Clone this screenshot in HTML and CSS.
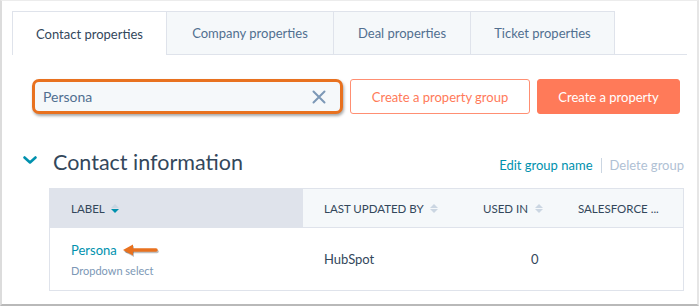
FILE: index.html
```html
<!DOCTYPE html>
<html lang="en">
<head>
    <meta charset="UTF-8">
    <title>Properties</title>
    <link rel="stylesheet" href="styles.css">
</head>
<body>
<div class="frame">

    <!-- Tabs -->
    <div class="tabs">
        <div class="tab active">Contact properties</div>
        <div class="tab tab-company">Company properties</div>
        <div class="tab tab-deal">Deal properties</div>
        <div class="tab tab-ticket">Ticket properties</div>
        <div class="tab-rest"></div>
    </div>

    <!-- Search and actions -->
    <div class="toolbar">
        <div class="search-highlight">
            <div class="search">
                <span class="search-text">Persona</span>
                <svg class="clear-icon" width="14" height="14" viewBox="0 0 14 14">
                    <path d="M1.5 1.5 L12.5 12.5 M12.5 1.5 L1.5 12.5" stroke="#7c98b6" stroke-width="2" stroke-linecap="round"/>
                </svg>
            </div>
        </div>
        <button class="btn btn-secondary">Create a property group</button>
        <button class="btn btn-primary">Create a property</button>
    </div>

    <!-- Group header -->
    <div class="group-header">
        <svg class="chevron" width="14" height="8" viewBox="0 0 14 8">
            <path d="M1.5 1.5 L7 6.5 L12.5 1.5" fill="none" stroke="#0091ae" stroke-width="2.6" stroke-linecap="round" stroke-linejoin="round"/>
        </svg>
        <h2 class="group-title">Contact information</h2>
        <div class="group-actions">
            <span class="link">Edit group name</span>
            <span class="divider"></span>
            <span class="link-disabled">Delete group</span>
        </div>
    </div>

    <!-- Table -->
    <table class="props">
        <thead>
            <tr>
                <th class="col-label sorted">LABEL <span class="sort"><i class="up"></i><i class="down"></i></span></th>
                <th class="col-updated">LAST UPDATED BY <span class="sort"><i class="up"></i><i class="down"></i></span></th>
                <th class="col-used">USED IN <span class="sort"><i class="up"></i><i class="down"></i></span></th>
                <th class="col-sf">SALESFORCE ...</th>
            </tr>
        </thead>
        <tbody>
            <tr>
                <td class="col-label">
                    <div class="prop-name">
                        <span class="link">Persona</span>
                        <svg class="arrow" width="40" height="14" viewBox="0 0 40 14">
                            <path d="M4 7 L34 7" stroke="rgba(0,0,0,0.25)" stroke-width="3.5" stroke-linecap="round" transform="translate(1,1.5)"/>
                            <path d="M1 7 L11 1.5 L11 12.5 Z" fill="rgba(0,0,0,0.25)" transform="translate(1,1.5)"/>
                            <path d="M6 7 L34 7" stroke="#e8711f" stroke-width="3.5" stroke-linecap="round"/>
                            <path d="M1 7 L11 1.5 L11 12.5 Z" fill="#e8711f"/>
                        </svg>
                    </div>
                    <div class="prop-type">Dropdown select</div>
                </td>
                <td class="col-updated">HubSpot</td>
                <td class="col-used num">0</td>
                <td class="col-sf"></td>
            </tr>
        </tbody>
    </table>

</div>
</body>
</html>
```

FILE: styles.css
```css
body {
    margin: 0;
    font-family: Lato, "Open Sans", sans-serif;
    background-color: #ffffff;
    color: #33475b;
}

.frame {
    width: 699px;
    height: 306px;
    box-sizing: border-box;
    border-left: 2px solid #dcdcdc;
    border-top: 1px solid #ececec;
    border-right: 2px solid #e6e6e6;
    border-bottom: 2px solid #b9b9b9;
    padding: 10px 0 0 10px;
}

/* Tabs */
.tabs {
    display: flex;
    height: 44px;
}

.tab {
    box-sizing: border-box;
    height: 44px;
    display: flex;
    align-items: center;
    justify-content: center;
    font-size: 13px;
    color: #516f90;
    background-color: #f5f8fa;
    border: 1px solid #dfe3eb;
    border-left: none;
}

.tab.active {
    width: 155px;
    background-color: #ffffff;
    color: #33475b;
    border-left: 1px solid #dfe3eb;
    border-bottom: none;
}

.tab-company {
    width: 167px;
}

.tab-deal {
    width: 137px;
}

.tab-ticket {
    width: 144px;
}

.tab-rest {
    width: 72px;
    border-bottom: 1px solid #dfe3eb;
}

/* Toolbar */
.toolbar {
    display: flex;
    align-items: center;
    gap: 7px;
    margin-top: 24px;
    padding-left: 20px;
}

.search-highlight {
    width: 311px;
    height: 35px;
    box-sizing: border-box;
    border: 3px solid #e8711f;
    border-radius: 7px;
    box-shadow: 1px 2px 3px rgba(0, 0, 0, 0.35);
    background-color: #f5f8fa;
}

.search {
    display: flex;
    align-items: center;
    justify-content: space-between;
    height: 100%;
    padding: 0 14px 0 8px;
}

.search-text {
    font-size: 14px;
    color: #516f90;
}

.btn {
    height: 35px;
    box-sizing: border-box;
    border-radius: 3px;
    font-family: Lato, "Open Sans", sans-serif;
    font-size: 13px;
    padding: 0;
}

.btn-secondary {
    width: 180px;
    background-color: #ffffff;
    border: 1px solid #ff8f73;
    color: #ff7a59;
}

.btn-primary {
    width: 143px;
    background-color: #ff7a59;
    border: 1px solid #ff7a59;
    color: #ffffff;
}

/* Group header */
.group-header {
    display: flex;
    align-items: center;
    box-sizing: border-box;
    margin-top: 35px;
    padding-left: 11px;
    width: 672px;
}

.chevron {
    margin-right: 16px;
    margin-top: -4px;
}

.group-title {
    margin: 0;
    font-size: 21.5px;
    font-weight: 400;
    color: #33475b;
}

.group-actions {
    margin-left: auto;
    display: flex;
    align-items: center;
    font-size: 13px;
    padding-top: 6px;
}

.link {
    color: #0091ae;
}

.link-disabled {
    color: #b0c1d4;
}

.divider {
    width: 1px;
    height: 15px;
    background-color: #cbd6e2;
    margin: 0 8px;
}

/* Table */
.props {
    margin: 13px 0 0 37px;
    width: 635px;
    border-collapse: collapse;
    table-layout: fixed;
}

.props th,
.props td {
    border: 1px solid #dfe3eb;
    border-left: none;
    border-right: none;
    text-align: left;
}

.props tr > :first-child {
    border-left: 1px solid #dfe3eb;
}

.props tr > :last-child {
    border-right: 1px solid #dfe3eb;
}

.props th {
    height: 38px;
    padding: 0 0 0 21px;
    background-color: #f5f8fa;
    font-size: 11.5px;
    font-weight: 400;
    color: #33475b;
    white-space: nowrap;
}

.props th.sorted {
    background-color: #dfe3eb;
}

.col-label {
    width: 232px;
}

.col-updated {
    width: 138px;
}

.col-used {
    width: 74px;
}

.sort {
    display: inline-flex;
    flex-direction: column;
    gap: 1px;
    vertical-align: middle;
    margin-left: 4px;
    margin-top: -2px;
}

.sort i {
    width: 0;
    height: 0;
    border-left: 4px solid transparent;
    border-right: 4px solid transparent;
}

.sort .up {
    border-bottom: 4px solid #cbd6e2;
}

.sort .down {
    border-top: 4px solid #cbd6e2;
}

.sorted .sort .down {
    border-top-color: #0091ae;
}

.props td {
    height: 62px;
    padding: 0 0 0 21px;
    font-size: 13px;
    color: #33475b;
    vertical-align: middle;
}

.props td.num {
    padding-left: 69px;
}

.prop-name {
    display: flex;
    align-items: center;
    font-size: 13px;
}

.arrow {
    margin-left: 5px;
}

.prop-type {
    margin-top: 6px;
    font-size: 11px;
    color: #7c98b6;
}
```
